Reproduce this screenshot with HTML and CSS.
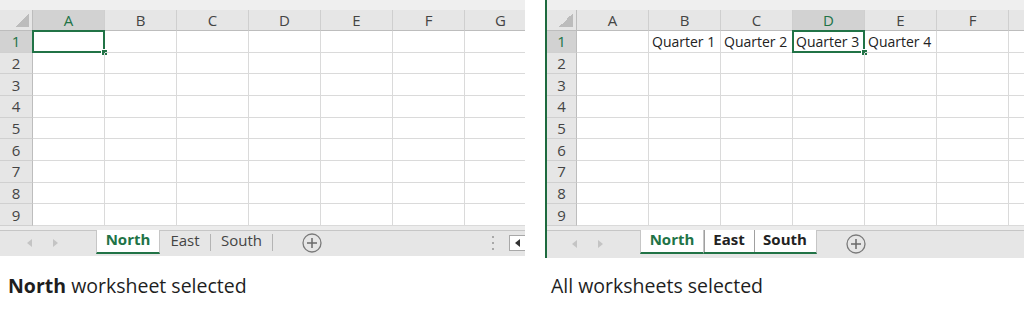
FILE: index.html
```html
<!DOCTYPE html>
<html lang="en">
<head>
    <meta charset="UTF-8">
    <title>Worksheet selection</title>
    <link rel="stylesheet" href="styles.css">
</head>
<body>
    <div class="page">
        <section class="pane">
            <div class="window">
                <div class="strip"></div>
                <div class="sheet" id="sheetNorth"></div>
                <div class="tabbar">
                    <div class="tab-nav">
                        <svg width="8" height="10" viewBox="0 0 8 10"><polygon points="6,1 1,5 6,9" fill="#c4c4c4"/></svg>
                        <svg width="8" height="10" viewBox="0 0 8 10"><polygon points="2,1 7,5 2,9" fill="#c4c4c4"/></svg>
                    </div>
                    <div class="tabs">
                        <span class="tab active">North</span>
                        <span class="tab">East</span>
                        <span class="tab">South</span>
                    </div>
                    <span class="add-sheet">
                        <svg width="20" height="20" viewBox="0 0 20 20"><circle cx="10" cy="10" r="9" fill="none" stroke="#7a7a7a" stroke-width="1.3"/><path d="M10 5v10M5 10h10" stroke="#6a6a6a" stroke-width="1.5"/></svg>
                    </span>
                    <span class="splitter">
                        <svg width="4" height="16" viewBox="0 0 4 16"><rect x="1" y="1" width="2" height="2" fill="#a8a8a8"/><rect x="1" y="7" width="2" height="2" fill="#a8a8a8"/><rect x="1" y="13" width="2" height="2" fill="#a8a8a8"/></svg>
                    </span>
                    <span class="scroll-btn">
                        <svg width="6" height="8" viewBox="0 0 6 8"><polygon points="5,0 0,4 5,8" fill="#333"/></svg>
                    </span>
                </div>
            </div>
            <p class="caption"><b>North</b> worksheet selected</p>
        </section>

        <section class="pane pane-grouped">
            <div class="window">
                <div class="strip"></div>
                <div class="sheet sheet-narrow" id="sheetGroup"></div>
                <div class="tabbar">
                    <div class="tab-nav">
                        <svg width="8" height="10" viewBox="0 0 8 10"><polygon points="6,1 1,5 6,9" fill="#c4c4c4"/></svg>
                        <svg width="8" height="10" viewBox="0 0 8 10"><polygon points="2,1 7,5 2,9" fill="#c4c4c4"/></svg>
                    </div>
                    <div class="tabs grouped">
                        <span class="tab active">North</span>
                        <span class="tab">East</span>
                        <span class="tab">South</span>
                    </div>
                    <span class="add-sheet">
                        <svg width="20" height="20" viewBox="0 0 20 20"><circle cx="10" cy="10" r="9" fill="none" stroke="#7a7a7a" stroke-width="1.3"/><path d="M10 5v10M5 10h10" stroke="#6a6a6a" stroke-width="1.5"/></svg>
                    </span>
                </div>
            </div>
            <p class="caption">All worksheets selected</p>
        </section>
    </div>

    <script>
        // last column is only partly visible, so the narrow sheet leaves its letter out
        function buildSheet(id, letters, selCol, values) {
            const sheet = document.getElementById(id);
            let html = '<div class="corner"></div>';
            letters.forEach((l, i) => {
                html += `<div class="col-head${i === selCol ? ' active' : ''}">${l}</div>`;
            });
            for (let r = 1; r <= 9; r++) {
                html += `<div class="row-head${r === 1 ? ' active' : ''}">${r}</div>`;
                letters.forEach((l, i) => {
                    const text = r === 1 && values[i] ? values[i] : '';
                    const cls = r === 1 && i === selCol ? 'cell selected' : 'cell';
                    html += `<div class="${cls}">${text}</div>`;
                });
            }
            sheet.innerHTML = html;
        }

        buildSheet('sheetNorth', ['A', 'B', 'C', 'D', 'E', 'F', 'G'], 0, []);
        buildSheet('sheetGroup', ['A', 'B', 'C', 'D', 'E', 'F', ''], 3, ['', 'Quarter 1', 'Quarter 2', 'Quarter 3', 'Quarter 4']);
    </script>
</body>
</html>
```

FILE: styles.css
```css
body {
    margin: 0;
    font-family: "Open Sans", "Noto Sans", sans-serif;
    background: #fff;
    color: #222;
}
.page {
    display: flex;
    gap: 20px;
}
.pane {
    width: 525px;
}
.pane-grouped {
    width: 479px;
}
.pane-grouped .window {
    border-left: 2px solid #1d6a3e;
}
.strip {
    height: 10px;
    background: #efefef;
}
.sheet {
    display: grid;
    grid-template-columns: 33px repeat(7, 72px);
    grid-template-rows: 21px repeat(9, 21.67px);
    overflow: hidden;
    font-size: 14px;
}
.sheet-narrow {
    grid-template-columns: 30px repeat(7, 72px);
}
.corner {
    background: #e6e6e6 linear-gradient(135deg, transparent 50%, #bcbcbc 50%) no-repeat right 3px bottom 3px / 14px 14px;
    border-right: 1px solid #bdbdbd;
    border-bottom: 1px solid #bdbdbd;
}
.col-head, .row-head {
    display: flex;
    align-items: center;
    justify-content: center;
    background: #e6e6e6;
    color: #444;
    font-size: 15px;
}
.col-head {
    border-right: 1px solid #cfcfcf;
    border-bottom: 1px solid #bdbdbd;
}
.row-head {
    border-right: 1px solid #bdbdbd;
    border-bottom: 1px solid #d0d0d0;
}
.col-head.active, .row-head.active {
    background: #d2d2d2;
    color: #217346;
}
.cell {
    display: flex;
    align-items: center;
    padding: 0 3px;
    white-space: nowrap;
    border-right: 1px solid #dadada;
    border-bottom: 1px solid #dadada;
    color: #222;
    position: relative;
}
.cell.selected::before {
    content: "";
    position: absolute;
    inset: -1px -1px -1px -1px;
    border: 2px solid #217346;
}
.cell.selected::after {
    content: "";
    position: absolute;
    right: -4px;
    bottom: -4px;
    width: 5px;
    height: 5px;
    background: #217346;
    border: 1px solid #fff;
}
.tabbar {
    display: flex;
    align-items: stretch;
    height: 26px;
    background: #e6e6e6;
    border-top: 4px solid #ececec;
    box-shadow: inset 0 1px 0 #c6c6c6;
}
.pane-grouped .tabbar {
    height: 28px;
}
.tab-nav {
    width: 96px;
    display: flex;
    align-items: center;
    gap: 17px;
    padding-left: 26px;
    box-sizing: border-box;
}
.pane-grouped .tab-nav {
    width: 93px;
    padding-left: 24px;
}
.tabs {
    display: flex;
    height: 24px;
}
.tab {
    display: flex;
    align-items: center;
    justify-content: center;
    box-sizing: border-box;
    padding-bottom: 3px;
    font-size: 15px;
    color: #444;
    position: relative;
}
.tab:nth-child(1) { width: 64px; }
.tab:nth-child(2) { width: 50px; }
.tab:nth-child(3) { width: 63px; }
.tab + .tab::before {
    content: "";
    position: absolute;
    left: 0;
    top: 4px;
    bottom: 3px;
    border-left: 1px solid #b4b4b4;
}
.tab:last-child::after {
    content: "";
    position: absolute;
    right: 0;
    top: 4px;
    bottom: 3px;
    border-left: 1px solid #b4b4b4;
}
.tab.active {
    background: #fff;
    color: #217346;
    font-weight: bold;
    border-bottom: 2px solid #217346;
    border-left: 1px solid #c6c6c6;
    border-right: 1px solid #c6c6c6;
}
.tab.active + .tab::before {
    display: none;
}
.tabs.grouped .tab {
    background: #fff;
    font-weight: bold;
    color: #222;
    border-bottom: 2px solid #217346;
}
.tabs.grouped .tab.active {
    color: #217346;
}
.tabs.grouped .tab + .tab::before {
    display: block;
    top: 0;
    bottom: 0;
    border-left-color: #a0a0a0;
}
.tabs.grouped .tab:last-child::after {
    display: none;
}
.tabs.grouped .tab:last-child {
    border-right: 1px solid #c6c6c6;
}
.add-sheet {
    display: flex;
    align-items: center;
    margin-left: 29px;
}
.splitter {
    display: flex;
    align-items: center;
    margin-left: auto;
    margin-right: 14px;
}
.scroll-btn {
    display: flex;
    align-items: center;
    justify-content: center;
    width: 16px;
    height: 16px;
    margin-top: 5px;
    background: #fff;
    border: 1px solid #a8a8a8;
    border-right: none;
    box-sizing: border-box;
}
.caption {
    margin: 16px 0 0 8px;
    font-size: 19.5px;
    color: #1e1e1e;
}
.pane-grouped .caption {
    margin-top: 14px;
    margin-left: 6px;
}
```
